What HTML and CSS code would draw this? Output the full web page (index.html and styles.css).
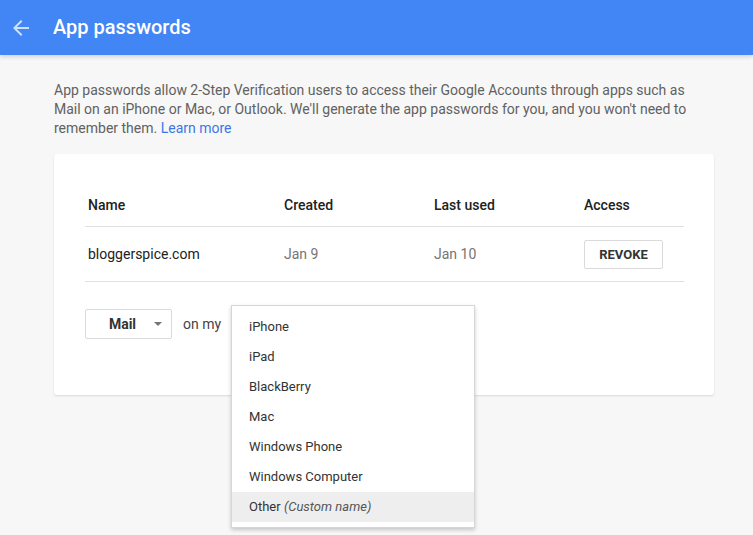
FILE: index.html
```html
<!DOCTYPE html>
<html lang="en">

<head>
    <meta charset="UTF-8">
    <meta name="viewport" content="width=device-width, initial-scale=1.0">
    <title>App passwords</title>
    <link rel="stylesheet" href="styles.css">
</head>

<body>
    <header class="topbar">
        <a class="back" href="#">
            <svg width="24" height="24" viewBox="0 0 24 24">
                <path d="M20 11H7.83l5.59-5.59L12 4l-8 8 8 8 1.41-1.41L7.83 13H20v-2z" fill="currentColor" />
            </svg>
        </a>
        <h1>App passwords</h1>
    </header>

    <main class="content">
        <p class="intro">
            App passwords allow 2-Step Verification users to access their Google Accounts through apps such as
            Mail on an iPhone or Mac, or Outlook. We'll generate the app passwords for you, and you won't need to
            remember them. <a href="#">Learn more</a>
        </p>

        <section class="card">
            <div class="pw-table">
                <div class="cell head">Name</div>
                <div class="cell head">Created</div>
                <div class="cell head">Last used</div>
                <div class="cell head">Access</div>

                <div class="cell row">bloggerspice.com</div>
                <div class="cell row date">Jan 9</div>
                <div class="cell row date">Jan 10</div>
                <div class="cell row"><button class="revoke">REVOKE</button></div>
            </div>

            <div class="generate">
                <div class="select">
                    <span>Mail</span>
                    <span class="caret"></span>
                </div>
                <span class="on-my">on my</span>

                <ul class="menu">
                    <li>iPhone</li>
                    <li>iPad</li>
                    <li>BlackBerry</li>
                    <li>Mac</li>
                    <li>Windows Phone</li>
                    <li>Windows Computer</li>
                    <li class="active">Other <em>(Custom name)</em></li>
                </ul>
            </div>
        </section>
    </main>
</body>

</html>
```

FILE: styles.css
```css
body {
    margin: 0;
    min-height: 100vh;
    background-color: #f7f7f7;
    font-family: Roboto, "Liberation Sans", Arial, sans-serif;
    color: #212121;
}

.topbar {
    height: 55px;
    background-color: #4285f4;
    display: flex;
    align-items: center;
    box-shadow: 0 2px 4px rgba(0, 0, 0, 0.15);
}

.back {
    display: flex;
    margin-left: 9px;
    margin-right: 20px;
    color: rgba(255, 255, 255, 0.75);
}

.topbar h1 {
    margin: 0;
    color: white;
    font-size: 20px;
    font-weight: 500;
    padding-bottom: 1px;
}

.content {
    width: 660px;
    margin-left: 54px;
    padding-bottom: 160px;
}

.intro {
    margin: 26px 0 16px;
    font-size: 14px;
    line-height: 19px;
    color: #616161;
}

.intro a {
    color: #3b78e7;
    text-decoration: none;
}

.card {
    background-color: white;
    border-radius: 3px;
    box-shadow: 0 1px 2px rgba(0, 0, 0, 0.12);
    padding: 30px 30px 56px 31px;
}

.pw-table {
    display: grid;
    grid-template-columns: 196px 150px 150px 1fr;
    font-size: 14px;
}

.cell {
    display: flex;
    align-items: center;
    padding-left: 3px;
    border-bottom: 1px solid #e0e0e0;
}

.head {
    height: 42px;
    font-weight: 500;
    color: #212121;
}

.row {
    height: 54px;
}

.date {
    color: #757575;
}

.revoke {
    width: 79px;
    height: 29px;
    background: white;
    border: 1px solid #dadada;
    border-radius: 2px;
    font-family: inherit;
    font-size: 13px;
    font-weight: 700;
    color: #333;
}

.generate {
    position: relative;
    display: flex;
    align-items: center;
    margin-top: 27px;
    font-size: 14px;
}

.select {
    width: 71px;
    height: 28px;
    padding-left: 14px;
    border: 1px solid #dadada;
    border-radius: 2px;
    display: flex;
    align-items: center;
    justify-content: center;
    gap: 18px;
    font-weight: 700;
    color: #333;
}

.caret {
    width: 0;
    height: 0;
    border-left: 4px solid transparent;
    border-right: 4px solid transparent;
    border-top: 4px solid #757575;
}

.on-my {
    margin-left: 11px;
    color: #444;
}

.menu {
    position: absolute;
    left: 146px;
    top: -4px;
    width: 242px;
    margin: 0;
    padding: 6px 0 5px;
    list-style: none;
    background: white;
    border: 1px solid #d6d6d6;
    box-shadow: 0 2px 4px rgba(0, 0, 0, 0.2);
    font-size: 13px;
    color: #333;
}

.menu li {
    height: 30px;
    line-height: 30px;
    padding-left: 17px;
}

.menu li.active {
    background-color: #eeeeee;
}

.menu em {
    color: #555;
}
```
